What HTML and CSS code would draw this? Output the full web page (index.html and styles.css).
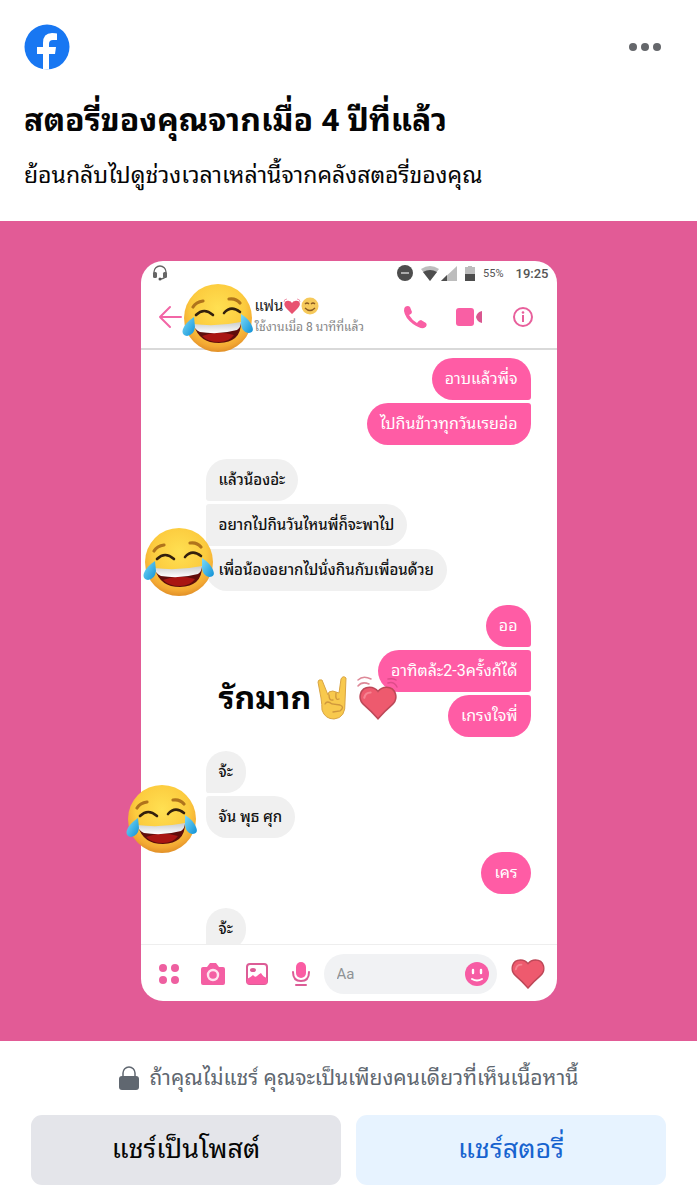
FILE: index.html
```html
<!DOCTYPE html>
<html lang="th">
<head>
<meta charset="utf-8">
<meta name="viewport" content="width=device-width, initial-scale=1">
<title>สตอรี่ของคุณ</title>
<link rel="stylesheet" href="styles.css">
</head>
<body>
<svg class="defs" aria-hidden="true">
  <defs>
    <radialGradient id="face" cx="50%" cy="36%" r="66%">
      <stop offset="0" stop-color="#ffe052"/>
      <stop offset=".6" stop-color="#fccb3e"/>
      <stop offset=".85" stop-color="#f3a833"/>
      <stop offset="1" stop-color="#dd8a25"/>
    </radialGradient>
    <linearGradient id="tear" x1="0" y1="0" x2="1" y2="1">
      <stop offset="0" stop-color="#7fdcf8"/>
      <stop offset="1" stop-color="#0e90d6"/>
    </linearGradient>
    <linearGradient id="teeth" x1="0" y1="0" x2="0" y2="1">
      <stop offset="0" stop-color="#c9ccce"/>
      <stop offset="1" stop-color="#ffffff"/>
    </linearGradient>
    <symbol id="joy" viewBox="0 0 72 70">
      <circle cx="36" cy="35" r="34" fill="url(#face)"/>
      <path d="M11 24q3-5 10-6M47 16q7-1 11 4" fill="none" stroke="#b0741c" stroke-width="3.2" stroke-linecap="round"/>
      <path d="M14 32q8-8 17 0M42 30q7-8 16-1" fill="none" stroke="#33200d" stroke-width="2.6" stroke-linecap="round"/>
      <path d="M12 42q24 5 47-2q0 19-22 20Q17 60 12 42z" fill="#5f0d0b"/>
      <path d="M20 53q15-6 32-1q-5 7-15 7q-11 0-17-6z" fill="#a91512"/>
      <path d="M11 41q24 3 48-2q0 5-4 8q-18 5-37 2q-5-2-7-8z" fill="url(#teeth)"/>
      <path d="M12 34q-9 6-11 12t4 7q7-1 8-9z" fill="url(#tear)"/>
      <path d="M59 31q8 5 11 12t-4 7q-6-1-7-9z" fill="url(#tear)"/>
    </symbol>
    <symbol id="heart" viewBox="0 0 36 32">
      <path d="M18 31Q12 24 5 18C-2 12 1 1 10 1q5 0 8 4q3-4 8-4c9 0 12 11 5 17Q24 24 18 31z" fill="#ee5a6e" stroke="#bd4858" stroke-width="1.500"/>
      <path d="M5 11q1-5 6-5" fill="none" stroke="#f68492" stroke-width="2" stroke-linecap="round"/>
    </symbol>
  </defs>
</svg>

<main class="memory">
  <header class="intro">
    <div class="topbar">
      <svg class="brand" viewBox="0 0 46 46" role="img" aria-label="Facebook">
        <circle cx="23" cy="23" r="22.5" fill="#1877f2"/>
        <path d="M19 45.500V30h-6v-7h6v-4q0-10 9-10 4 0 5 .5V16h-4q-4 0-4 4v3h7l-1 7h-6v15.500z" fill="#fff"/>
      </svg>
      <button class="more" type="button" aria-label="เพิ่มเติม"><span></span><span></span><span></span></button>
    </div>
    <h1>สตอรี่ของคุณจากเมื่อ 4 ปีที่แล้ว</h1>
    <p>ย้อนกลับไปดูช่วงเวลาเหล่านี้จากคลังสตอรี่ของคุณ</p>
  </header>

  <section class="stage">
    <article class="story">
      <div class="screen">
        <div class="status">
          <svg class="headset" viewBox="0 0 16 16"><path d="M2 10V7a6 6 0 0 1 12 0v3q0 3-5 4" fill="none" stroke="#666" stroke-width="1.300"/><rect x="1" y="7" width="4" height="6" rx="1.500" fill="#666"/><rect x="11" y="7" width="4" height="6" rx="1.500" fill="#666"/><circle cx="8" cy="14" r="1.500" fill="#555"/></svg>
          <div class="signals">
            <svg class="dnd" viewBox="0 0 16 16"><circle cx="8" cy="8" r="8" fill="#4d4d4d"/><path d="M4 8h8" stroke="#ccc" stroke-width="1.500"/></svg>
            <svg class="wifi" viewBox="0 0 18 15"><path d="M0 3q9-6 18 0L9 15z" fill="#bdbdbd"/><path d="M2 6q7-4 14 0L9 15z" fill="#4d4d4d"/></svg>
            <svg class="cell" viewBox="0 0 16 15"><path d="M0 15L16 0v15z" fill="#bdbdbd"/><path d="M0 15l6-6v6z" fill="#4d4d4d"/></svg>
            <svg class="battery" viewBox="0 0 10 15"><path d="M3 0h4v1h3v14H0V1h3z" fill="#bdbdbd"/><path d="M0 8h10v7H0z" fill="#4d4d4d"/></svg>
            <span class="percent">55%</span>
            <time>19:25</time>
          </div>
        </div>

        <div class="contact">
          <button class="back" type="button" aria-label="กลับ"><svg viewBox="0 0 24 24"><path d="M23 12H2M12 2L2 12l10 10" fill="none" stroke="#f266a6" stroke-width="2" stroke-linecap="round" stroke-linejoin="round"/></svg></button>
          <div class="who">
            <div class="name">แฟน<svg class="beat" viewBox="0 0 18 18"><path d="M9 17L3 11C-1 6 3 3 6 4q2 0 3 2q1-2 3-2c4-1 7 2 3 7z" fill="#e85270"/><path d="M1 5q0-3 3-3M17 5q0-3-3-3" fill="none" stroke="#f09bb0"/></svg><svg class="smile" viewBox="0 0 18 18"><circle cx="9" cy="9" r="8.500" fill="#f6c95a"/><path d="M4 7q2-2 4 0M10 7q2-2 4 0M4 11q5 5 10 0" fill="none" stroke="#8a5a22" stroke-width="1.200"/></svg></div>
            <div class="active">ใช้งานเมื่อ 8 นาทีที่แล้ว</div>
          </div>
          <div class="calls">
            <button type="button" aria-label="โทร"><svg viewBox="0 0 24 24"><path d="M2 2q3-2 5 0l2 5q0 2-3 3q3 5 8 8q2-3 4-3l5 3q2 3-2 5q-4 1-11-4Q2 13 1 6 1 3 2 2z" fill="#f95fa4"/></svg></button>
            <button class="wide" type="button" aria-label="วิดีโอคอล"><svg viewBox="0 0 28 20"><rect x="1" y="1" width="18" height="18" rx="3" fill="#f95fa4"/><path d="M21 10q1-5 6-6v12q-5-1-6-6z" fill="#d9568f"/></svg></button>
            <button type="button" aria-label="ข้อมูล"><svg viewBox="0 0 24 24"><circle cx="12" cy="12" r="9" fill="none" stroke="#e8609c" stroke-width="2"/><path d="M12 10v7" fill="none" stroke="#e8609c" stroke-width="2"/><circle cx="12" cy="7.500" r="1.300" fill="#e8609c"/></svg></button>
          </div>
        </div>

        <div class="chat">
          <div class="group sent"><p>อาบแล้วพี่จ</p><p>ไปกินข้าวทุกวันเรยอ่อ</p></div>
          <div class="group got"><p>แล้วน้องอ่ะ</p><p>อยากไปกินวันไหนพี่ก็จะพาไป</p><p>เพื่อน้องอยากไปนั่งกินกับเพื่อนด้วย</p></div>
          <div class="group sent"><p>ออ</p><p>อาทิตล้ะ2-3ครั้งก้ได้</p><p>เกรงใจพี่</p></div>
          <div class="group got"><p>จ้ะ</p><p>จัน พุธ ศุก</p></div>
          <div class="group sent"><p class="single">เคร</p></div>
          <div class="group got"><p>จ้ะ</p></div>
        </div>

        <form class="composer">
          <button type="button" aria-label="แอพ"><svg viewBox="0 0 26 26"><g fill="#ee5fa0"><circle cx="7" cy="7" r="4"/><circle cx="19" cy="7" r="4"/><circle cx="7" cy="19" r="4"/><circle cx="19" cy="19" r="4"/></g></svg></button>
          <button type="button" aria-label="กล้อง"><svg viewBox="0 0 26 26"><path d="M3 6h4l3-4h6l3 4h4q2 0 2 2v14q0 2-2 2H3q-2 0-2-2V8q0-2 2-2z" fill="#f45fa3"/><circle cx="13" cy="14" r="5" fill="none" stroke="#ffe3ef" stroke-width="2.400"/></svg></button>
          <button type="button" aria-label="รูปภาพ"><svg viewBox="0 0 26 26"><rect x="3" y="3" width="20" height="20" rx="3" fill="#fff" stroke="#dc5c96" stroke-width="2"/><ellipse cx="9" cy="9" rx="3" ry="2" fill="#dc5c96"/><path d="M3 18q4-2 6-4q2 3 4 1t4-3q2 4 6 5v6H3z" fill="#fa5ca3"/></svg></button>
          <button type="button" aria-label="เสียง"><svg viewBox="0 0 26 26"><rect x="8" y="1" width="10" height="16" rx="5" fill="#fa5ca3"/><path d="M5 11q0 9 8 9t8-9M8 24h10" fill="none" stroke="#dc5c96" stroke-width="2" stroke-linecap="round"/></svg></button>
          <label class="field">
            <input type="text" placeholder="Aa" aria-label="ข้อความ">
            <svg viewBox="0 0 24 24"><circle cx="12" cy="12" r="12" fill="#f75ca4"/><path d="M8 8v3M16 8v3" stroke="#fff" stroke-width="2.400" stroke-linecap="round"/><path d="M7 17q5 3 10 0" fill="none" stroke="#fff" stroke-width="2" stroke-linecap="round"/></svg>
          </label>
          <button class="love" type="button" aria-label="หัวใจ"><svg viewBox="0 0 36 32"><use href="#heart"/></svg></button>
        </form>
      </div>

      <svg class="sticker joy-top"><use href="#joy"/></svg>
      <svg class="sticker joy-middle"><use href="#joy"/></svg>
      <svg class="sticker joy-bottom"><use href="#joy"/></svg>
      <div class="caption">
        <span>รักมาก</span>
        <svg class="horns" viewBox="0 0 34 44"><path d="M5 22L2 6q0-3 4-2l6 15 1-3q4-2 7 0l3 1 2-14q2-4 5-1l-1 24q1 16-11 17-9 0-12-9Q6 29 5 22z" fill="#f8c94d" stroke="#d9a544" stroke-width="1"/><path d="M13 19q0 6 4 5M20 17q-1 8 3 6M9 28q2-4 7 0l8 1q5 2 0 6l-7 1" fill="none" stroke="#cf973c" stroke-width="1.300" stroke-linecap="round"/></svg>
        <svg class="beating" viewBox="0 0 42 44"><path d="M2 10q4-5 11-2M2 4q5-5 13-1" fill="none" stroke="#dd8998" stroke-width="1.500" stroke-linecap="round"/><path d="M32 7q6-2 9 4M32 3q5-1 8 1" fill="none" stroke="#df4c8a" stroke-width="1.500" stroke-linecap="round"/><use href="#heart" x="3" y="10" width="38" height="34"/></svg>
      </div>
    </article>
  </section>

  <footer class="share">
    <p class="privacy"><svg viewBox="0 0 20 24"><path d="M4 11V7a6 6 0 0 1 12 0v4" fill="none" stroke="#606770" stroke-width="1.500"/><rect x="0" y="10" width="20" height="14" rx="3" fill="#606770"/></svg>ถ้าคุณไม่แชร์ คุณจะเป็นเพียงคนเดียวที่เห็นเนื้อหานี้</p>
    <div class="actions">
      <button class="post" type="button">แชร์เป็นโพสต์</button>
      <button class="add" type="button">แชร์สตอรี่</button>
    </div>
  </footer>
</main>
</body>
</html>
```
FILE: styles.css
```css
* { box-sizing: border-box; }
body { margin: 0; background: #fff; color: #050505; font-family: Roboto, "Noto Sans Thai Looped", "Noto Looped Thai", Loma, Garuda, "Noto Sans Thai", "Noto Sans", sans-serif; }
h1, p { margin: 0; }
button { margin: 0; padding: 0; border: 0; background: none; font: inherit; cursor: pointer; }
svg { display: block; flex: none; }
.defs { position: absolute; width: 0; height: 0; }

.intro { padding: 24px; }
.topbar { display: flex; justify-content: space-between; align-items: center; }
.brand { width: 46px; height: 46px; }
.more { display: flex; gap: 4px; padding: 12px; }
.more span { width: 8px; height: 8px; border-radius: 50%; background: #65676b; }
h1 { margin-top: 24px; font-size: 32px; line-height: 52px; font-weight: 700; white-space: nowrap; }
.intro p { margin-top: 8px; font-size: 23px; line-height: 43px; white-space: nowrap; }

.stage { display: flex; justify-content: center; padding: 40px 24px; background: #e25b96; }
.story { position: relative; width: 100%; max-width: 416px; }
.screen { display: flex; flex-direction: column; aspect-ratio: 416 / 740; overflow: hidden; border-radius: 22px; background: #fff; }

.status { display: flex; justify-content: space-between; align-items: center; height: 24px; padding: 0 8px 0 11px; color: #555; }
.headset { width: 16px; height: 16px; }
.signals { display: flex; align-items: center; gap: 8px; }
.dnd { width: 16px; height: 16px; }
.wifi { width: 18px; height: 15px; }
.cell { width: 16px; height: 15px; margin-left: -6px; }
.battery { width: 10px; height: 15px; }
.percent { font-size: 11px; }
.signals time { margin-left: 4px; font-size: 13px; font-weight: 500; }

.contact { display: flex; align-items: center; height: 65px; padding: 0 22px 0 17px; border-bottom: 2px solid #d9d9d9; }
.back svg { width: 24px; height: 24px; }
.who { flex: 1; margin-left: 73px; white-space: nowrap; }
.name { display: flex; align-items: center; font-size: 15px; line-height: 21px; color: #222; }
.beat, .smile { width: 18px; height: 18px; }
.active { font-size: 12px; line-height: 21px; color: #858585; }
.calls { display: flex; align-items: center; gap: 28px; }
.calls svg { width: 24px; height: 24px; }
.calls .wide svg { width: 28px; height: 20px; }

.chat { display: flex; flex: 1; flex-direction: column; gap: 14px; min-height: 0; overflow: hidden; padding: 8px 26px 0 65px; }
.group { display: flex; flex: none; flex-direction: column; gap: 3px; }
.group p { padding: 0 13px; border-radius: 21px; font-size: 16px; line-height: 42px; white-space: nowrap; }
.sent { align-items: flex-end; }
.sent p { border-top-right-radius: 3px; border-bottom-right-radius: 3px; background: #ff5ca5; color: #fff; }
.sent p:first-child { border-top-right-radius: 21px; }
.sent p:last-child:not(:first-child), .sent .single { border-bottom-right-radius: 21px; }
.got { align-items: flex-start; }
.got p { border-top-left-radius: 3px; border-bottom-left-radius: 3px; background: #f0f0f0; color: #111; font-size: 15px; font-weight: 500; }
.got p:first-child { border-top-left-radius: 21px; }
.got p:last-child:not(:first-child) { border-bottom-left-radius: 21px; }

.composer { display: flex; align-items: center; gap: 18px; height: 57px; padding: 2px 12px 0 15px; border-top: 1px solid #eee; }
.composer svg { width: 26px; height: 26px; }
.field { display: flex; flex: 1; align-items: center; min-width: 0; height: 40px; margin: 0 -4px 0 -8px; padding: 0 8px 0 13px; border-radius: 20px; background: #f1f2f4; }
.field input { flex: 1; width: 0; min-width: 0; padding: 0; border: 0; outline: 0; background: none; font: 15px Roboto, sans-serif; }
.field input::placeholder { color: #8f9295; }
.composer .field svg { width: 24px; height: 24px; }
.composer .love svg { width: 34px; height: 30px; }

.sticker { position: absolute; width: 72px; height: 70px; }
.joy-top { left: 41px; top: 22px; }
.joy-middle { left: 2px; top: 266px; }
.joy-bottom { left: -15px; top: 523px; }
.caption { position: absolute; left: 78px; top: 415px; display: flex; align-items: center; font-size: 32px; line-height: 44px; font-weight: 700; white-space: nowrap; }
.horns { width: 34px; height: 44px; margin-left: 5px; }
.beating { width: 42px; height: 44px; margin-left: 6px; }

.share { padding: 15px 31px; }
.privacy { display: flex; justify-content: center; align-items: center; gap: 11px; font-size: 21px; line-height: 44px; color: #606770; white-space: nowrap; }
.privacy svg { width: 20px; height: 24px; }
.actions { display: grid; grid-template-columns: 1fr 1fr; gap: 15px; margin-top: 15px; }
.actions button { height: 70px; padding-bottom: 9px; border-radius: 11px; font-size: 27px; }
.post { background: #e4e5ea; color: #050505; }
.add { background: #e7f3ff; color: #1763cf; }
```
